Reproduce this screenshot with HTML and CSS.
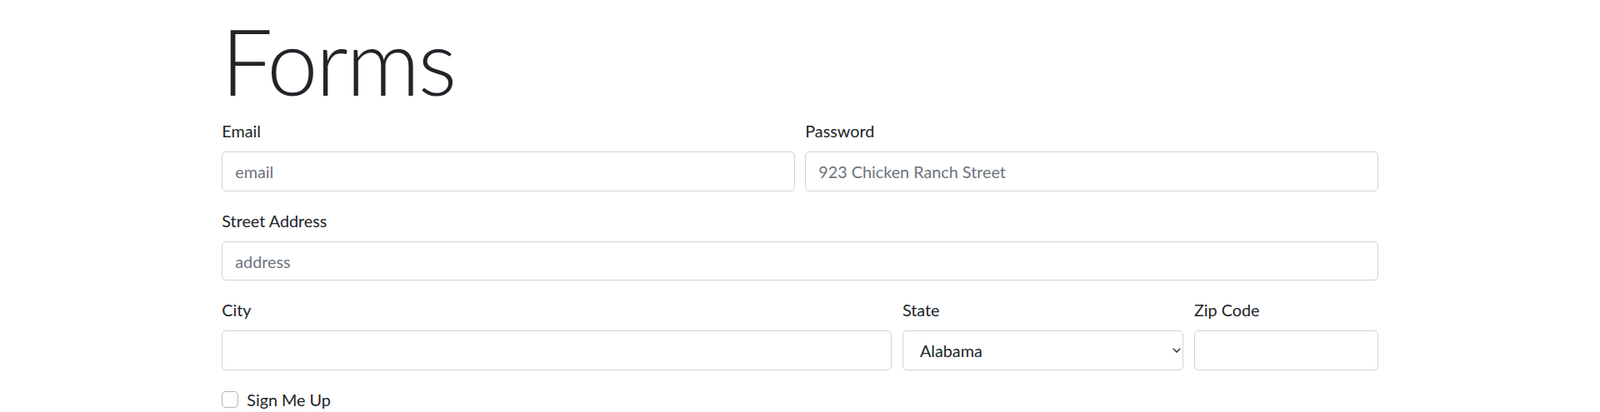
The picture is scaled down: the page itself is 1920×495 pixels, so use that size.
FILE: index.html
```html
<!DOCTYPE html>
<html lang="en">
<head>
<meta charset="utf-8">
<title>Forms</title>
<link rel="stylesheet" href="styles.css">
</head>
<body>
<div class="container">
  <h1 class="display">Forms</h1>
  <form class="form">
    <div class="form-row">
      <div class="col col-6 form-group">
        <label class="label" for="email">Email</label>
        <input class="control" type="email" id="email" placeholder="email">
      </div>
      <div class="col col-6 form-group">
        <label class="label" for="password">Password</label>
        <input class="control" type="text" id="password" placeholder="923 Chicken Ranch Street">
      </div>
    </div>
    <div class="form-group">
      <label class="label" for="address">Street Address</label>
      <input class="control" type="text" id="address" placeholder="address">
    </div>
    <div class="form-row">
      <div class="col col-7 form-group">
        <label class="label" for="city">City</label>
        <input class="control" type="text" id="city">
      </div>
      <div class="col col-3 form-group">
        <label class="label" for="state">State</label>
        <div class="select-wrap">
          <select class="control select" id="state">
            <option>Alabama</option>
            <option>Alaska</option>
          </select>
          <svg class="chevron" width="10" height="6" viewBox="0 0 10 6"><path d="M0.8 0.8 L5 5 L9.2 0.8" fill="none" stroke="#333" stroke-width="1.5"/></svg>
        </div>
      </div>
      <div class="col col-2 form-group">
        <label class="label" for="zip">Zip Code</label>
        <input class="control" type="text" id="zip">
      </div>
    </div>
    <div class="check">
      <input class="check-input" type="checkbox" id="signup">
      <label class="check-label" for="signup">Sign Me Up</label>
    </div>
  </form>
</div>
</body>
</html>
```
FILE: styles.css
```css
* { box-sizing: border-box; }
html, body { margin: 0; padding: 0; background: #fff; }
body {
  font-family: "Lato", "Open Sans", sans-serif;
  font-size: 19.8px;
  line-height: 30px;
  color: #212529;
}
.container {
  width: 1425px;
  margin: 0 auto;
  padding: 5.5px 18.75px 0;
}
.display {
  margin: 0 0 4.5px;
  font-size: 110px;
  line-height: 132px;
  font-weight: 300;
  letter-spacing: -2.5px;
  margin-left: -1px;
}
.form { margin: 0; }
.form-row {
  display: flex;
  margin: 0 -6.25px;
}
.col { padding: 0 6.25px; }
.col-6 { flex: 0 0 50%; }
.col-7 { flex: 0 0 58.3333%; }
.col-3 { flex: 0 0 25%; }
.col-2 { flex: 0 0 16.6667%; }
.form-group { margin-bottom: 20px; }
.label {
  display: block;
  margin-bottom: 10px;
}
.control {
  display: block;
  width: 100%;
  height: 47.5px;
  padding: 1px 15px 0;
  font-family: inherit;
  font-size: 19.8px;
  color: #495057;
  background: #fff;
  border: 1px solid #ced4da;
  border-radius: 5px;
  outline: none;
}
.control::placeholder { color: #6c757d; opacity: 1; }
.select-wrap { position: relative; }
.select {
  appearance: none;
  -webkit-appearance: none;
  padding-left: 20px;
  color: #212529;
}
.chevron {
  position: absolute;
  right: 3px;
  top: 21px;
  pointer-events: none;
}
.check {
  position: relative;
  display: flex;
  align-items: flex-start;
  min-height: 30px;
}
.check-input {
  appearance: none;
  -webkit-appearance: none;
  width: 20px;
  height: 20px;
  margin: 5px 10px 0 0;
  border: 1px solid #adb5bd;
  border-radius: 5px;
  background: #fff;
  flex: 0 0 auto;
}
.check-label { line-height: 30px; }
```
